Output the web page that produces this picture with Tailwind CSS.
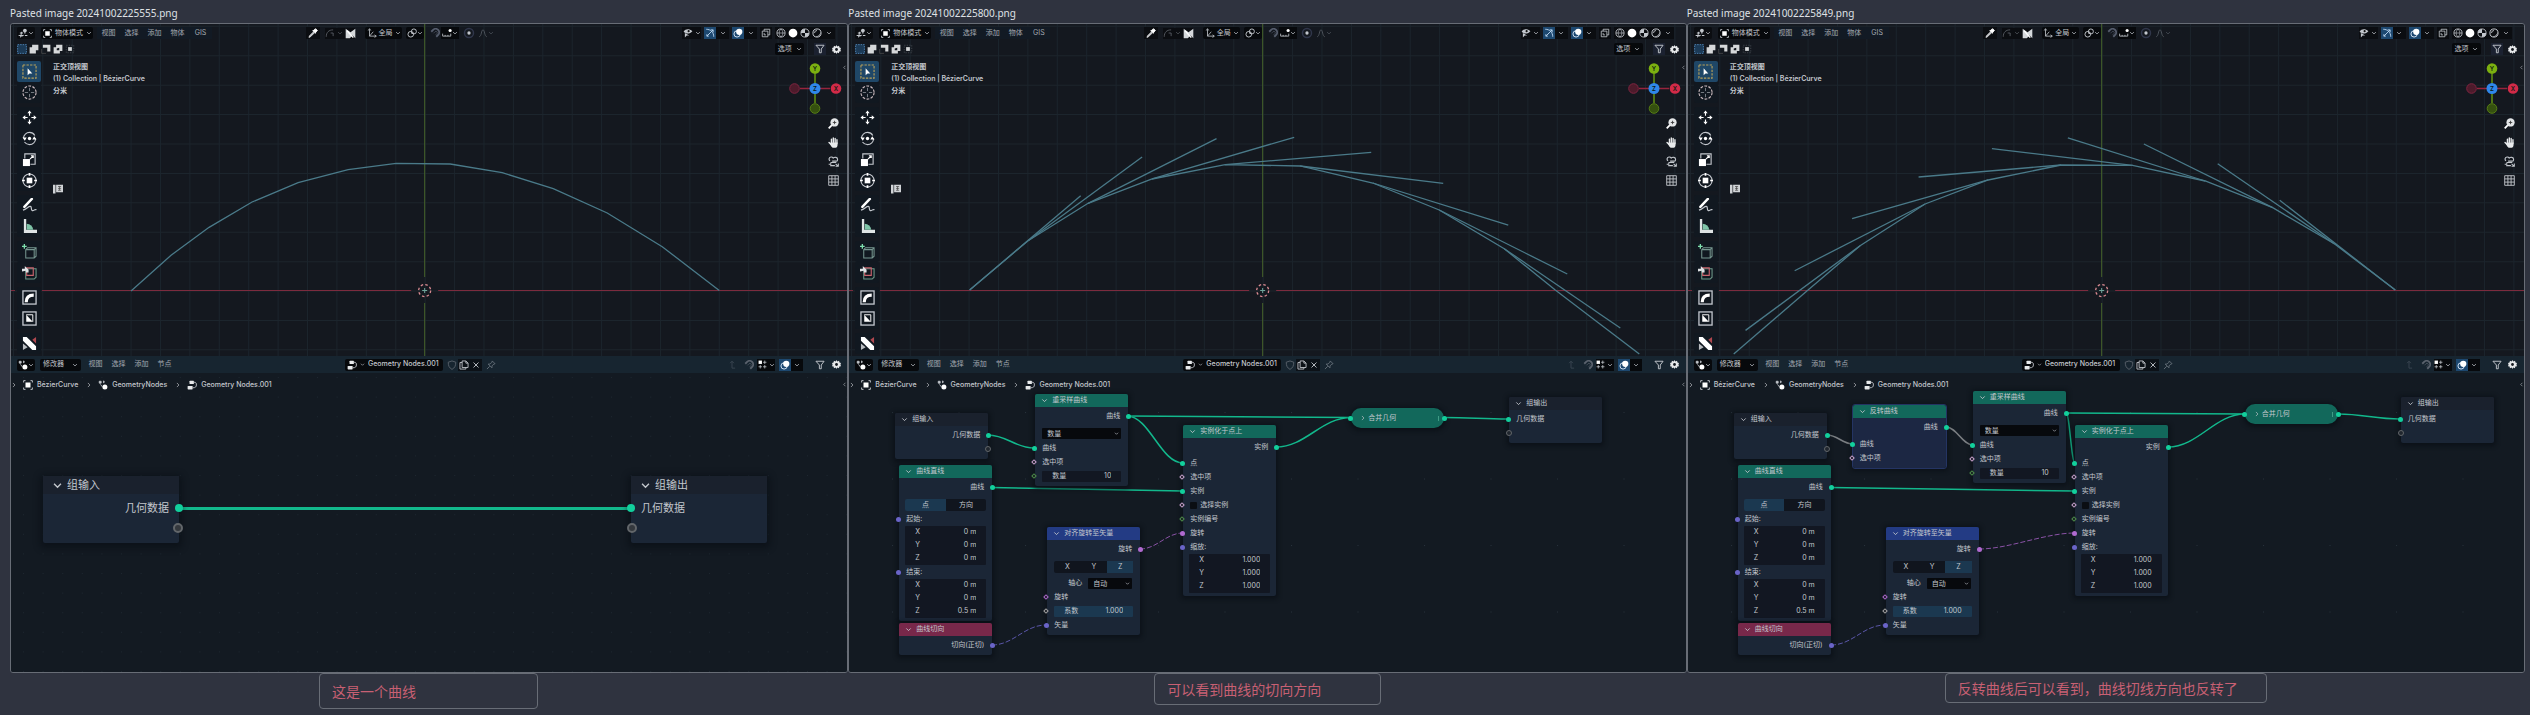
<!DOCTYPE html>
<html lang="zh-CN">
<head>
<meta charset="utf-8">
<title>曲线切向</title>
<script src="https://cdn.jsdelivr.net/npm/@tailwindcss/browser@4"></script>
</head>
<body class="min-h-screen bg-[#2f333f] font-['Inter','Noto_Sans_CJK_SC',sans-serif] text-[#c3c7cd]">

<!-- Icon sprite: every icon is drawn on a 16 unit square -->
<svg class="hidden" aria-hidden="true">
  <symbol id="chev" viewBox="0 0 16 16"><path d="M3 5.500l5 5 5-5" fill="none" stroke="currentColor" stroke-width="2"/></symbol>
  <symbol id="right" viewBox="0 0 16 16"><path d="M5 2.500l5.500 5.500L5 13.500" fill="none" stroke="currentColor" stroke-width="1.800"/></symbol>
  <symbol id="left" viewBox="0 0 16 16"><path d="M11 2.500L5.500 8l5.500 5.500" fill="none" stroke="currentColor" stroke-width="1.800"/></symbol>
  <symbol id="view3d" viewBox="0 0 16 16"><path d="M1 12h8M3 8h5M6 6l-2 9M11 4v5M8 11l-2 3" stroke="currentColor" stroke-width="1.600" fill="none"/><circle cx="11" cy="4" r="3" fill="currentColor"/><path d="M11 12h4" stroke="currentColor" stroke-width="1.600"/></symbol>
  <symbol id="object" viewBox="0 0 16 16"><rect x="4" y="4" width="8" height="8" fill="#fff"/><path d="M1 4V1h3M12 1h3v3M15 12v3h-3M4 15H1v-3" fill="none" stroke="currentColor" stroke-width="1.500"/></symbol>
  <symbol id="dropper" viewBox="0 0 16 16"><path d="M9 4l3-3 3 3-3 3z" fill="#fff" stroke="#fff" stroke-width="1.500" stroke-linejoin="round"/><path d="M7.500 3.500l5 5" stroke="#fff" stroke-width="2"/><path d="M9 6l-6.500 6.500L1.500 15l2.500-1L10.500 7.500" fill="currentColor" stroke="#ddd" stroke-width="1.400"/></symbol>
  <symbol id="arc" viewBox="0 0 16 16"><path d="M2 14C2 7 6 3 13 3" fill="none" stroke="currentColor" stroke-width="1.500"/><path d="M9 8h4v5" fill="none" stroke="currentColor" stroke-width="1.500"/></symbol>
  <symbol id="flag" viewBox="0 0 16 16"><path d="M1 1l7 5 7-5v14l-4-4-4 4H1z" fill="currentColor"/><path d="M3 4l9 10" stroke="#fff" stroke-width="2"/></symbol>
  <symbol id="axes" viewBox="0 0 16 16"><path d="M4 2v11h10M2 4l2-3 2 3M12 11l3 2-3 2M4 13l6-7" fill="none" stroke="currentColor" stroke-width="1.300"/></symbol>
  <symbol id="link" viewBox="0 0 16 16"><circle cx="6" cy="10" r="4.500" fill="none" stroke="currentColor" stroke-width="1.500"/><circle cx="11" cy="5.500" r="4" fill="none" stroke="currentColor" stroke-width="1.500"/><circle cx="8" cy="8" r="1.300" fill="currentColor"/></symbol>
  <symbol id="magnet" viewBox="0 0 16 16"><path d="M2 6l3-3a5.500 5.500 0 018 8l-3 3" fill="none" stroke="currentColor" stroke-width="3"/><path d="M5.500 8.500L8 6a2 2 0 013 3l-2 2" fill="none" stroke="currentColor" stroke-width="1"/></symbol>
  <symbol id="ruler" viewBox="0 0 16 16"><path d="M1 9v4h13V9M5 11v2M9.500 11v2" fill="none" stroke="currentColor" stroke-width="1.300"/><circle cx="13" cy="4" r="2.500" fill="#fff"/></symbol>
  <symbol id="dot" viewBox="0 0 16 16"><circle cx="8" cy="8" r="6" fill="none" stroke="#30364a" stroke-width="2"/><circle cx="8" cy="8" r="2.200" fill="currentColor"/></symbol>
  <symbol id="bell" viewBox="0 0 16 16"><path d="M2 14C6 13 5 3 8 3s2 10 6 11" fill="none" stroke="currentColor" stroke-width="1.500"/></symbol>
  <symbol id="eye" viewBox="0 0 16 16"><path d="M1 6c3-5 9-5 14-1-4 5-10 5-14 1z" fill="currentColor"/><circle cx="9" cy="5" r="1.700" fill="#111"/><path d="M3 8v7l3-3h4z" fill="currentColor"/></symbol>
  <symbol id="gizmo" viewBox="0 0 16 16"><path d="M2 2c7 0 12 5 12 12M3 13L13 3M9 3h4v4M3 10v3h3" fill="none" stroke="#b9d4ef" stroke-width="1.500"/></symbol>
  <symbol id="overlay" viewBox="0 0 16 16"><circle cx="6.500" cy="9.500" r="5" fill="none" stroke="#cfe0f2" stroke-width="1.600"/><circle cx="10" cy="6" r="5" fill="#fff"/></symbol>
  <symbol id="xray" viewBox="0 0 16 16"><path d="M2 5h9v9H2zM5 5V2h9v9h-3M5 8v3h3" fill="none" stroke="currentColor" stroke-width="1.300"/></symbol>
  <symbol id="wire" viewBox="0 0 16 16"><circle cx="8" cy="8" r="6.500" fill="none" stroke="currentColor" stroke-width="1.400"/><path d="M8 1.500c-4 4-4 9 0 13M8 1.500c4 4 4 9 0 13M1.500 8h13" fill="none" stroke="currentColor" stroke-width="1"/></symbol>
  <symbol id="solid" viewBox="0 0 16 16"><circle cx="8" cy="8" r="7" fill="#fff"/></symbol>
  <symbol id="mat" viewBox="0 0 16 16"><circle cx="8" cy="8" r="6.500" fill="none" stroke="currentColor" stroke-width="1.400"/><path d="M8 1.500a6.500 6.500 0 00-6.500 6.500H8zM8 8h6.500A6.500 6.500 0 018 14.500z" fill="currentColor"/></symbol>
  <symbol id="render" viewBox="0 0 16 16"><circle cx="8" cy="8" r="6.500" fill="none" stroke="currentColor" stroke-width="1.600"/><path d="M4 8a4 4 0 014-4" fill="none" stroke="currentColor" stroke-width="1.400"/><path d="M13.500 6A6 6 0 016 13.500c4 0 7-3 7.500-7.500z" fill="currentColor"/></symbol>
  <symbol id="sel0" viewBox="0 0 16 16"><rect x="1" y="1" width="14" height="14" fill="#1c3a56" stroke="#4d83b5" stroke-width="1.500" stroke-dasharray="2.500 1.500"/></symbol>
  <symbol id="sel1" viewBox="0 0 16 16"><path d="M5 1h10v9h-4v5H1V5h4z" fill="#d6d8da"/></symbol>
  <symbol id="sel2" viewBox="0 0 16 16"><path d="M3 1h12v11h-5V6H3z" fill="#d6d8da"/><path d="M1 8v7h7" fill="none" stroke="#555" stroke-width="1"/></symbol>
  <symbol id="sel3" viewBox="0 0 16 16"><path d="M5 1h10v10h-4v4H1V5h4zM6 7v3h4V6z" fill="#d6d8da" fill-rule="evenodd"/></symbol>
  <symbol id="sel4" viewBox="0 0 16 16"><rect x="5" y="5" width="6" height="6" fill="#d6d8da"/><path d="M2 2h12v12H2z" fill="none" stroke="#555b62" stroke-width="1" stroke-dasharray="2 2"/></symbol>
  <symbol id="funnel" viewBox="0 0 16 16"><path d="M1.500 2h13L10 8v6H7V8z" fill="none" stroke="currentColor" stroke-width="1.500"/></symbol>
  <symbol id="gear" viewBox="0 0 16 16"><path d="M8 0l1.500 2.500 3-1 .8 2.800 2.700.9L15 8l1 3-3 .5-.7 3-3-1L8 16l-1.500-2.500-3 1-.7-3L0 11l1-3-1-2.800 2.700-.9.800-2.800 3 1z" fill="#e6e8ea"/><circle cx="8" cy="8" r="2.500" fill="#15191f"/></symbol>
  <symbol id="box-select" viewBox="0 0 16 16"><rect x="1" y="1" width="14" height="14" fill="none" stroke="#b9a15a" stroke-width="1.200" stroke-dasharray="2.500 1.300"/><path d="M6 4.500v7.500l2-2h3z" fill="#fff"/></symbol>
  <symbol id="cursor" viewBox="0 0 16 16"><circle cx="8" cy="8" r="7" fill="none" stroke="#c9b9bd" stroke-width="1.200" stroke-dasharray="3 1.500"/><path d="M8 3v3.500M8 9.500V13M3 8h3.500M9.500 8H13" stroke="#7b8188" stroke-width="1"/></symbol>
  <symbol id="move" viewBox="0 0 16 16"><path d="M8 .5l2.300 3H5.700zM8 15.500l2.300-3H5.700zM.5 8l3-2.300v4.600zM15.500 8l-3-2.300v4.600z" fill="#fff"/><path d="M8 3v3M8 10v3M3 8h3M10 8h3" stroke="#fff" stroke-width="1.200"/></symbol>
  <symbol id="rotate" viewBox="0 0 16 16"><circle cx="8" cy="8" r="6.500" fill="none" stroke="currentColor" stroke-width="1.200" stroke-dasharray="16 4.400"/><circle cx="8" cy="8" r="1.800" fill="#fff"/><path d="M13 5.500l2.500 3.500H11zM3 10.500L.5 7H5z" fill="#fff"/></symbol>
  <symbol id="scale" viewBox="0 0 16 16"><path d="M3 7V2h11v11H9" fill="none" stroke="currentColor" stroke-width="1.200"/><rect x="1" y="7.500" width="7.500" height="7.500" fill="#fff"/><path d="M8.500 7.500L12 4M9.500 4H12v2.500" fill="none" stroke="#fff" stroke-width="1.200"/></symbol>
  <symbol id="transform" viewBox="0 0 16 16"><circle cx="8" cy="8" r="7" fill="none" stroke="currentColor" stroke-width="1.200"/><rect x="5" y="5" width="6" height="6" fill="#fff"/><path d="M8 0v3M8 13v3M0 8h3M13 8h3" stroke="#fff" stroke-width="1.800"/></symbol>
  <symbol id="pen" viewBox="0 0 16 16"><path d="M10.500 1l-8 8.500" stroke="#fff" stroke-width="2.600" stroke-linecap="round"/><path d="M1 13c4-1 6-4.500 8-4s0 4 2 4.500 2-2 4.500-1" fill="none" stroke="currentColor" stroke-width="1.300"/></symbol>
  <symbol id="measure" viewBox="0 0 16 16"><path d="M2 0h2.500v11.500H16V15H2z" fill="#dfe4e4"/><path d="M5 5a7 7 0 017 6.500H5z" fill="#7fc4a8"/></symbol>
  <symbol id="addcube" viewBox="0 0 16 16"><path d="M4 6l2-2h9v9l-2 2H4zM4 6h9v9M13 6l2-2" fill="none" stroke="#76968f" stroke-width="1.100"/><path d="M2.500 0v5M0 2.500h5" stroke="#7fe0ae" stroke-width="1.400"/></symbol>
  <symbol id="extrude" viewBox="0 0 16 16"><path d="M4 6l2-2h9v9l-2 2H4z" fill="none" stroke="#6f9a8a" stroke-width="1.100"/><path d="M5 3h7v8H5z" fill="none" stroke="#c9636c" stroke-width="1.200"/><path d="M0 7V4h3V1l4 4v3H4V6z" fill="#dfe2e5"/></symbol>
  <symbol id="spin" viewBox="0 0 16 16"><rect x="1" y="1" width="14" height="14" fill="none" stroke="currentColor" stroke-width="1.400"/><path d="M4.500 13c0-5 3-7.500 8-7.500" fill="none" stroke="#fff" stroke-width="3.400"/></symbol>
  <symbol id="shear" viewBox="0 0 16 16"><rect x="1" y="1" width="14" height="14" fill="none" stroke="currentColor" stroke-width="1.400"/><path d="M4.500 4l7 7.500h-7z" fill="#fff"/><path d="M4.500 4h7v7.500" fill="none" stroke="#fff" stroke-width="1"/></symbol>
  <symbol id="brush" viewBox="0 0 16 16"><path d="M1 1h4l10 10v4h-4L1 5z" fill="#fff"/><path d="M1 8v7l5-3z" fill="#b9bcc0"/><path d="M15 1l-4 3 4 4z" fill="#b0484f"/></symbol>
  <symbol id="panel" viewBox="0 0 16 16"><path d="M0 1h4v14H0zM5 1h11v12H5z" fill="#d0d3d6"/><path d="M8 4h5M8 7h5M8 10h5M10.500 4v6" stroke="#333" stroke-width="1"/></symbol>
  <symbol id="zoom" viewBox="0 0 16 16"><path d="M6 10l-5 5" stroke="#fff" stroke-width="2.600"/><circle cx="9.500" cy="6.500" r="6" fill="#e4e6e8"/><path d="M9.500 4v5M7 6.500h5" stroke="#333" stroke-width="1.200"/></symbol>
  <symbol id="hand" viewBox="0 0 16 16"><path d="M5 9V3M7.700 8V1.500M10.400 8V2M13 9V4M1.500 8l3 3" stroke="#e8eaec" stroke-width="2" stroke-linecap="round"/><path d="M4 8h10v2c0 3-1 5.500-3 5.500H7.500C5.500 15.500 4 12 3 10z" fill="#e8eaec"/></symbol>
  <symbol id="camera" viewBox="0 0 16 16"><path d="M3 7a3 3 0 011-5.500c2-.5 3 .5 3.500 1.500C9 1.500 14 1 14 5c0 2-1 2.500-2 2.500H6" fill="none" stroke="currentColor" stroke-width="1.600"/><path d="M4 9.500h8M4 9.500v4.500h6M1 12h2M11 11.500l4 3.500M15 11v4h-4" fill="none" stroke="currentColor" stroke-width="1.500"/></symbol>
  <symbol id="grid" viewBox="0 0 16 16"><path d="M1 1h14v14H1zM5.700 1v14M10.300 1v14M1 5.700h14M1 10.300h14" fill="none" stroke="currentColor" stroke-width="1.300"/></symbol>
  <symbol id="geonodes" viewBox="0 0 16 16"><circle cx="11" cy="11" r="4" fill="#fff"/><path d="M2 2h3v3H2zM8 3h3M4 7l3 4M9 1v4" fill="currentColor" stroke="currentColor" stroke-width="1.400"/></symbol>
  <symbol id="tree" viewBox="0 0 16 16"><rect x="4" y="1" width="7" height="5.500" rx="1" fill="#e8eaec"/><rect x="1" y="9.500" width="8" height="5.500" rx="1" fill="#e8eaec"/><path d="M11 3.500c4 0 4 2 4 4.500s-1 4.500-6 4.500" fill="none" stroke="currentColor" stroke-width="1.400"/></symbol>
  <symbol id="shield" viewBox="0 0 16 16"><path d="M8 1.500l6 2c0 6-1.500 9-6 11.500-4.500-2.500-6-5.500-6-11.500z" fill="none" stroke="currentColor" stroke-width="1.400"/></symbol>
  <symbol id="copy" viewBox="0 0 16 16"><path d="M5 1.500h6l3.500 3.500v7H5zM11 1.500V5h3.500M5 4H1.500v10.500H11V12" fill="none" stroke="currentColor" stroke-width="1.400"/></symbol>
  <symbol id="cross" viewBox="0 0 16 16"><path d="M3 3l10 10M13 3L3 13" stroke="currentColor" stroke-width="1.800"/></symbol>
  <symbol id="pin" viewBox="0 0 16 16"><path d="M10 1.500l4.500 4.500-2 .5-3 3 0 3-6-6h3l3-3zM6 10l-4.500 4.500" fill="none" stroke="currentColor" stroke-width="1.400"/></symbol>
  <symbol id="up" viewBox="0 0 16 16"><path d="M5 5l3-3 3 3M8 2v11h5" fill="none" stroke="currentColor" stroke-width="1.400"/></symbol>
  <symbol id="snapgrid" viewBox="0 0 16 16"><rect x="1" y="1" width="6" height="6" fill="#fff"/><path d="M9 4h6M12 1v6M1 12h6M4 9v6M9 12h6M12 9v6" stroke="currentColor" stroke-width="1.400"/></symbol>
</svg>

<main id="board" class="grid grid-cols-3 pl-[10px] pr-[5px]"></main>

<script>
const icon = (id, cls) => `<svg class="${cls || 'size-[10px]'} shrink-0" aria-hidden="true"><use href="#${id}"/></svg>`;
const chev = icon('chev', 'size-[6px]');
const btn = (inner, cls, label) => `<button aria-label="${label || ''}" class="flex h-[12px] items-center justify-center ${cls}">${inner}</button>`;
const menus = names => names.map(n => `<button class="w-[23px] text-center whitespace-nowrap text-[#a3a9b1]">${n}</button>`).join('');

/* ---------- 3D viewport ---------- */
const AX = 425, AY = 291, STEP = 29.4;
function scene(curve, tangents) {
  let g = '';
  for (let k = -14; k <= 14; k++) g += `<path d="M${AX + STEP * k} 24V356"/>`;
  for (let k = -9; k <= 2; k++) g += `<path d="M11 ${AY + STEP * k}H847"/>`;
  return `<svg class="absolute inset-0 h-full w-full" viewBox="11 24 836 332" preserveAspectRatio="xMidYMid slice" aria-hidden="true">
    <g stroke="#1c252d" stroke-width="1">${g}</g>
    <path d="M11 ${AY - .5}h4M42 ${AY - .5}H411M438 ${AY - .5}H847" stroke="#7c2b3e"/>
    <path d="M${AX - .5} 24V277M${AX - .5} 303V356" stroke="#45612a"/>
    <circle cx="424.500" cy="290.500" r="6" fill="none" stroke="#d98a91" stroke-width="1.300" stroke-dasharray="2.500 2.200"/>
    <path d="M424.500 288v5M422 290.500h5" stroke="#6fa59b" stroke-width="1"/>
    <g fill="none" stroke="#4a7a89" stroke-width="1.300"><polyline points="${curve}"/>${tangents.map(t => `<path d="M${t[0]}L${t[1]}"/>`).join('')}</g>
  </svg>`;
}
const tools = [
  ['box-select','框选'],['cursor','游标'],0,['move','移动'],['rotate','旋转'],['scale','缩放'],['transform','变换'],0,
  ['pen','标注'],['measure','测量'],0,['addcube','添加立方体'],['extrude','挤出'],0,['spin','旋绕'],['shear','切变'],0,['brush','笔刷']];
const toolbar = tools.map((t, i) => t === 0 ? '<span class="h-[4px]"></span>' :
  `<button aria-label="${t[1]}" class="flex h-[21px] w-[24px] items-center justify-center rounded-[2px] ${i === 0 ? 'bg-[#1f4767]' : 'bg-[#111820]'}">${icon(t[0], 'size-[15px]')}</button>`).join('');

const viewport = p => `
<section aria-label="3D 视图" class="relative flex h-[332px] flex-col overflow-hidden bg-[#14181f] text-[7px]">
  ${scene(p.curve, p.tangents)}
  <header class="relative mt-[3px] flex h-[12px] items-center pl-[6px] pr-[12px]">
    ${btn(icon('view3d') + chev, 'w-[18px] rounded-[2px] bg-[#0b0d11]', '编辑器类型')}
    <button class="ml-[6px] flex h-[12px] w-[52px] items-center gap-[3px] rounded-[2px] bg-[#07090c] pl-[2px] whitespace-nowrap">${icon('object', 'size-[9px]')}<span>物体模式</span>${chev}</button>
    <nav class="ml-[4px] flex h-[12px] items-center bg-[#121a24]">${menus(['视图','选择','添加','物体','GIS'])}</nav>
    ${btn(icon('dropper'), 'ml-[94px] w-[14px] bg-[#0b0d11]', '吸管')}
    <div class="ml-[5px] flex w-[30px] items-center gap-[2px] bg-[#0b0d11] text-[#565b62]">${icon('arc')}${chev}${icon('flag', 'size-[11px] text-[#d5d8db]')}</div>
    ${btn(icon('axes') + '<span>全局</span>' + chev, 'ml-[10px] w-[37px] gap-[2px] rounded-[2px] bg-[#07090c]', '变换坐标系')}
    ${btn(icon('link') + chev, 'ml-[4px] w-[18px] rounded-[2px] bg-[#07090c]', '轴心点')}
    ${btn(icon('magnet'), 'ml-[5px] w-[12px] text-[#555c6c]', '吸附')}
    ${btn(icon('ruler') + chev, 'w-[18px] bg-[#07090c]', '吸附选项')}
    ${btn(icon('dot', 'size-[12px]'), 'ml-[4px] w-[12px]', '衰减编辑')}
    ${btn(icon('bell') + chev, 'ml-[2px] w-[18px] text-[#4f555d]', '衰减曲线')}
    <div class="ml-auto flex items-center">
      ${btn(icon('eye') + chev, 'w-[19px] gap-[2px] bg-[#0b0d11]', '可见性')}
      ${btn(icon('gizmo'), 'ml-[3px] w-[12px] bg-[#1d4870]', 'Gizmo')}${btn(chev, 'w-[13px] bg-[#0b0d11]', 'Gizmo 选项')}
      ${btn(icon('overlay'), 'ml-[3px] w-[12px] bg-[#1d4870]', '叠加层')}${btn(chev, 'w-[13px] bg-[#0b0d11]', '叠加层选项')}
      ${btn(icon('xray'), 'ml-[3px] w-[12px] bg-[#0b0d11]', '透视')}
      <div class="ml-[3px] flex bg-[#0b0d11]">${['wire','solid','mat','render'].map(s => btn(icon(s), 'w-[12px]', s)).join('')}${btn(chev, 'w-[12px]', '着色选项')}</div>
    </div>
  </header>
  <div class="relative mt-[4px] flex h-[12px] items-center gap-[2px] pl-[6px] pr-[5px]">
    ${['sel0','sel1','sel2','sel3','sel4'].map(s => btn(icon(s), 'w-[10px]', s)).join('')}
    ${btn('<span>选项</span>' + chev, 'ml-auto w-[29px] gap-[4px] rounded-[2px] bg-[#07090c]', '选项')}
    ${btn(icon('funnel'), 'ml-[8px] w-[12px] bg-[#1b2130]', '过滤')}
    ${btn(icon('gear', 'size-[9px]'), 'ml-[2px] w-[12px]', '设置')}
  </div>
  <div class="relative flex grow pl-[6px] pt-[6px]">
    <div class="flex flex-col">${toolbar}</div>
    <div class="ml-[12px] font-semibold leading-[12px]">
      <p>正交顶视图</p><p>(1) Collection | BézierCurve</p><p>分米</p>
      <span class="mt-[87px] block">${icon('panel')}</span>
    </div>
    <div class="ml-auto flex flex-col items-end pr-[5px]">
      <svg class="h-[54px] w-[56px]" viewBox="786 61 56 54" aria-label="视图方向">
        <path d="M815 68v20M815 88v15" stroke="#5d8d12" stroke-width="1.600"/><path d="M800 88.500h30" stroke="#97243d" stroke-width="1.600"/>
        <circle cx="815" cy="68.500" r="5.300" fill="#7cb010"/><circle cx="815" cy="108.500" r="4.800" fill="#35500f" stroke="#567d15"/>
        <circle cx="794.500" cy="88.500" r="4.800" fill="#4d1b2b" stroke="#7d2440"/><circle cx="836" cy="88.500" r="5.300" fill="#d22a48"/>
        <circle cx="815" cy="88.500" r="5.500" fill="#2f87ea"/>
        <g font-size="6" font-weight="600" text-anchor="middle" fill="#0c1a10"><text x="815" y="71">Y</text><text x="815" y="91">Z</text><text x="836" y="91">X</text></g>
      </svg>
      <div class="mr-[3px] mt-[2px] flex flex-col gap-[7px]">${['zoom','hand','camera','grid'].map(s => btn(icon(s, 'size-[11px]'), 'w-[12px]', s)).join('')}</div>
    </div>
  </div>
  <span class="absolute right-0 top-[41px]">${icon('left', 'size-[5px]')}</span>
</section>`;

/* ---------- node editor ---------- */
const COL = { geo: 'bg-[#12cf9c]', bool: 'bg-[#caa3d0]', int: 'bg-[#4f8f4c]', vec: 'bg-[#6a64c8]', rot: 'bg-[#b06ad0]', val: 'bg-[#a5a5a5]' };
function socket(kind, side, big) {
  const pos = big ? (side === 'l' ? '-left-[4px]' : '-right-[4px]') : (side === 'l' ? '-left-[3px]' : '-right-[3px]');
  if (kind === 'none') return `<i class="absolute inset-y-0 my-auto rounded-full border ${pos} ${big ? 'size-[10px] border-2 border-[#62666a] bg-[#34383d]' : 'size-[6px] border-[#62666a] bg-[#20262e]'}"></i>`;
  if (kind.endsWith('*')) return `<i class="absolute inset-y-0 my-auto size-[4px] rotate-45 ${pos} ${COL[kind.slice(0, -1)]} flex items-center justify-center"><b class="size-[2px] bg-[#14181f]"></b></i>`;
  return `<i class="absolute inset-y-0 my-auto rounded-full ${pos} ${big ? 'size-[8px]' : 'size-[5px]'} ${COL[kind]}"></i>`;
}
const out = (t, k) => `<div class="relative flex h-[14px] items-center justify-end px-[8px]">${t}${socket(k, 'r')}</div>`;
const inp = (t, k) => `<div class="relative flex h-[14px] items-center px-[7px]">${t}${socket(k, 'l')}</div>`;
const num = (t, v, k, cls) => `<label class="relative flex h-[14px] items-center px-[7px]">
  <span class="flex h-[11px] w-full items-center justify-between rounded-[1px] px-[10px] ${cls}"><span>${t}</span><input class="w-[30px] bg-transparent text-right" value="${v}"></span>${socket(k, 'l')}</label>`;
const xyz = vals => `<div class="mx-[6px] rounded-[1px] bg-[#121722]">${['X','Y','Z'].map((a, i) =>
  `<label class="flex h-[13px] items-center justify-between px-[10px]"><span>${a}</span><input class="w-[40px] bg-transparent text-right" value="${vals[i]}"></label>`).join('')}</div>`;
const pick = (label, v, cls) => `<span class="relative flex h-[11px] items-center rounded-[1px] bg-[#07090d] ${cls}">
  <select aria-label="${label}" class="h-[11px] w-full appearance-none bg-transparent pl-[5px] leading-[11px]"><option>${v}</option></select>
  <span class="pointer-events-none absolute right-[2px]">${icon('chev', 'size-[5px]')}</span></span>`;
const HEAD = { green: 'bg-[#12685b]', blue: 'bg-[#233b84]', red: 'bg-[#78284a]', plain: 'bg-[#1a212d]' };
const node = (title, color, place, body, shell) => `
<article class="absolute w-[93px] rounded-[2px] pb-[3px] shadow-[0_1px_4px_2px_rgba(8,14,20,0.7)] ${shell || 'bg-[#1b2636]'} ${place}">
  <h3 class="mb-[2px] flex h-[13px] items-center gap-[4px] rounded-t-[2px] pl-[6px] ${HEAD[color]}">${icon('chev', 'size-[7px]')}${title}</h3>${body}
</article>`;

const nInput = node('组输入', 'plain', 'left-[46px] top-[40px]', out('几何数据', 'geo') + out('', 'none'));
const nLine = node('曲线直线', 'green', 'left-[50px] top-[92px]',
  out('曲线', 'geo') +
  `<div class="mx-[6px] mb-px mt-[5px] flex h-[12px] text-center"><button class="grow basis-0 rounded-l-[2px] bg-[#1b3850]">点</button><button class="grow basis-0 rounded-r-[2px] bg-[#10151e]">方向</button></div>` +
  inp('起始:', 'vec') + xyz(['0 m','0 m','0 m']) + inp('结束:', 'vec') + xyz(['0 m','0 m','0.5 m']));
const nTangent = node('曲线切向', 'red', 'left-[50px] top-[250px]', out('切向(正切)', 'vec'));
const nAlign = node('对齐旋转至矢量', 'blue', 'left-[198px] top-[154px]',
  out('旋转', 'rot') +
  `<div class="mx-[7px] mb-[3px] mt-[5px] flex h-[12px] rounded-[2px] bg-[#10151e] text-center"><button class="grow basis-0">X</button><button class="grow basis-0">Y</button><button class="grow basis-0 bg-[#1b3850]">Z</button></div>
   <div class="flex h-[14px] items-center justify-end gap-[6px] px-[8px]"><span>轴心</span>${pick('轴心', '自动', 'w-[44px]')}</div>` +
  inp('旋转', 'rot*') + num('系数', '1.000', 'val*', 'bg-[#1b3850]') + inp('矢量', 'vec'));
const resample = place => node('重采样曲线', 'green', place,
  out('曲线', 'geo') + pick('模式', '数量', 'mx-[7px] mb-[2px] mt-[5px]') +
  inp('曲线', 'geo') + inp('选中项', 'bool*') + num('数量', '10', 'int*', 'bg-[#121722]'));
const instance = place => node('实例化于点上', 'green', place,
  out('实例', 'geo') + '<div class="h-[2px]"></div>' + inp('点', 'geo') + inp('选中项', 'bool*') + inp('实例', 'geo') +
  inp('<label class="flex items-center gap-[3px]"><input type="checkbox" class="size-[7px] appearance-none rounded-[1px] bg-[#0b0e13]">选择实例</label>', 'bool*') +
  inp('实例编号', 'int*') + inp('旋转', 'rot') + inp('缩放:', 'vec') + xyz(['1.000','1.000','1.000']));
const reverse = node('反转曲线', 'green', 'left-[165px] top-[32px]',
  out('曲线', 'geo') + '<div class="h-[3px]"></div>' + inp('曲线', 'geo') + inp('选中项', 'bool*'), 'bg-[#1c2743] outline outline-[#243463]');
const outputNode = place => node('组输出', 'plain', place, inp('几何数据', 'geo') + inp('', 'none'));
const join = place => `<article class="absolute flex h-[20px] w-[93px] items-center gap-[2px] rounded-full bg-[#12685b] pl-[9px] shadow-[0_1px_4px_2px_rgba(8,14,20,0.7)] ${place}">
  ${icon('right', 'size-[6px]')}<h3>合并几何</h3><span class="ml-auto mr-[5px] h-[5px] w-px bg-[#3f9c86]"></span>${socket('geo', 'l')}${socket('geo', 'r')}</article>`;
const bigNode = (title, place, row, end, side) => `
<article class="absolute w-[136px] rounded-[2px] bg-[#1b2636] pb-[5px] text-[11px] shadow-[0_2px_6px_3px_rgba(8,14,20,0.6)] ${place}">
  <h3 class="mb-[4px] flex h-[18px] items-center gap-[4px] bg-[#1a212d] pl-[9px]">${icon('chev', 'size-[11px]')}${title}</h3>
  <div class="relative flex h-[20px] items-center px-[10px] ${end}">${row}${socket('geo', side, true)}</div>
  <div class="relative h-[20px]">${socket('none', side, true)}</div>
</article>`;

/* a link leaves and enters its sockets horizontally */
const link = (x1, y1, x2, y2, stroke, extra) => {
  const d = Math.min(30, (x2 - x1) / 2.5);
  return `<path d="M${x1} ${y1}C${x1 + d} ${y1} ${x2 - d} ${y2} ${x2} ${y2}" stroke="${stroke || '#12b88c'}" ${extra || ''}/>`;
};
const dash = 'stroke-dasharray="5 2" stroke-width="1"';
const common = link(154,645,208,625,'#5a56a8',dash);

const crumb = (ic, t) => `<li class="flex items-center gap-[4px]">${icon('right', 'mr-[2px] size-[6px]')}${icon(ic)}<a href="#">${t}</a></li>`;
const editor = (p, i) => `
<section aria-label="几何节点编辑器" class="text-[7px]">
  <header class="flex h-[17px] items-center bg-[#172530] pl-[6px] pr-[5px]">
    ${btn(icon('geonodes') + chev, 'w-[18px] rounded-[2px] bg-[#07090c]', '编辑器类型')}
    ${btn('<span>修改器</span>' + chev, 'ml-[5px] w-[41px] gap-[8px] rounded-[2px] bg-[#07090c] whitespace-nowrap', '修改器')}
    <nav class="ml-[3px] flex">${menus(['视图','选择','添加','节点'])}</nav>
    <div class="ml-[169px] flex h-[12px] w-[98px] items-center gap-[3px] rounded-[2px] bg-[#07090c] pl-[2px] whitespace-nowrap">${icon('tree')}${icon('chev', 'size-[5px]')}<input aria-label="节点组名称" class="w-[76px] bg-transparent font-medium" value="Geometry Nodes.001"></div>
    ${btn(icon('shield'), 'ml-[3px] w-[12px] text-[#5d656e]', '伪用户')}
    ${btn(icon('copy'), 'w-[12px] bg-[#0c1117]', '新建')}
    ${btn(icon('cross', 'size-[8px]'), 'w-[12px] bg-[#0c1117]', '断开')}
    ${btn(icon('pin'), 'ml-[3px] w-[12px] text-[#68727c]', '固定')}
    <div class="ml-auto flex items-center">
      ${btn(icon('up'), 'w-[12px] text-[#3c4854]', '上级')}
      ${btn(icon('magnet'), 'ml-[5px] w-[12px] text-[#5a626d]', '吸附')}
      ${btn(icon('snapgrid', 'size-[9px]') + chev, 'ml-[2px] w-[18px] gap-[2px] bg-[#07090c]', '吸附到')}
      ${btn(icon('overlay'), 'ml-[4px] w-[12px] bg-[#1d4870]', '叠加层')}${btn(chev, 'w-[12px] bg-[#07090c]', '叠加层选项')}
      ${btn(icon('funnel'), 'ml-[11px] w-[12px]', '过滤')}
      ${btn(icon('gear', 'size-[9px]'), 'ml-[4px] w-[12px]', '设置')}
    </div>
  </header>
  <div class="relative h-[299px] overflow-hidden bg-[#131a22]">
    <svg class="absolute inset-0 h-full w-full" aria-hidden="true">
      <defs><pattern id="dots${i}" x="${p.dot[0]}" y="${p.dot[1]}" width="${p.dot[2]}" height="${p.dot[2]}" patternUnits="userSpaceOnUse"><rect width="1" height="1" fill="${p.dot[3]}"/></pattern></defs>
      <rect width="100%" height="100%" fill="url(#dots${i})"/>
      <g transform="translate(-11 -373)" fill="none" stroke-width="1.500">${p.links}</g>
    </svg>
    <nav class="relative flex h-[24px] items-center" aria-label="路径"><ol class="flex items-center gap-[8px] font-medium whitespace-nowrap">
      ${crumb('object', 'BézierCurve')}${crumb('geonodes', 'GeometryNodes')}${crumb('tree', 'Geometry Nodes.001')}</ol></nav>
    <span class="absolute right-0 top-[9px]">${icon('left', 'size-[5px]')}</span>
    ${p.nodes}
  </div>
</section>`;

const panels = [
  {
    name: 'Pasted image 20241002225555.png', note: '这是一个曲线', box: 'ml-[309px] w-[219px] h-[36px]',
    curve: '131,291 171,255.300 209,227.300 252,202 298,182.700 348,169.700 396,163.300 450,164 502,172.700 553,188.700 607,213 662,246.700 719,290.500', tangents: [],
    dot: [12, 4, 19.6, '#1d2730'],
    links: link(180,508.5,630,508.5,'#12b88c','stroke-width="3"'),
    nodes: bigNode('组输入', 'left-[32px] top-[103px]', '几何数据', 'justify-end', 'r') + bigNode('组输出', 'left-[620px] top-[103px]', '几何数据', 'justify-start', 'l')
  },
  {
    name: 'Pasted image 20241002225800.png', note: '可以看到曲线的切向方向', box: 'ml-[306px] w-[227px] h-[32px]',
    curve: '131.600,290 190,240.700 250,203.300 314,179 387,164.700 462,166 534.600,183 601,210 666,248.700 717,290',
    tangents: [['131.600 290','242.600 195.700'],['190 240.700','304 157'],['250 203.300','378.400 138.700'],['314 179','456 137.300'],['387 164.700','533 152.300'],['462 166','605 183.300'],['534.600 183','670 225'],['601 210','729 274'],['666 248.700','782 328'],['717 290','801 354']],
    dot: [43, 39, 66.5, '#27313b'],
    links: link(150,435,196,448) + link(289,416,345,463) + link(289,416,513,417.5) + link(438,447,513,417.5) + link(607,417.5,670,419) + link(153,487.5,345,491) + link(302,549,345,533,'#8a52a6',dash) + common,
    nodes: nInput + nLine + nTangent + nAlign + resample('left-[186px] top-[21px]') + instance('left-[334px] top-[52px]') + join('left-[502px] top-[35px]') + outputNode('left-[660px] top-[24px]')
  },
  {
    name: 'Pasted image 20241002225849.png', note: '反转曲线后可以看到，曲线切线方向也反转了', box: 'ml-[258px] w-[322px] h-[30px]',
    curve: '718,290 657.400,244 595.500,207.700 528,181 455.400,165.300 384,165 311,180 248,204 183,245.700 131,290',
    tangents: [['718 290','602.500 200.300'],['657.400 244','540.500 163.700'],['595.500 207.700','466.700 144'],['528 181','390.700 138'],['455.400 165.300','314.800 148.700'],['384 165','241.500 177'],['311 180','175 218.700'],['248 204','117.600 270.700'],['183 245.700','68.500 330.300'],['131 290','56.700 354']],
    dot: [43, 39, 66.5, '#27313b'],
    links: link(150,435,176,444,'#7b7f83') + link(269,427,296,445,'#7b7f83') + link(389,413,398,463) + link(389,413,568,414) + link(491,447,568,414) + link(661,414,723,419) + link(153,487.5,398,491) + link(302,549,398,533,'#8a52a6',dash) + common,
    nodes: nInput + nLine + nTangent + nAlign + reverse + resample('left-[285px] top-[18px]') + instance('left-[387px] top-[52px]') + join('left-[557px] top-[31px]') + outputNode('left-[713px] top-[24px]')
  }
];

document.getElementById('board').innerHTML = panels.map((p, i) => `
<figure class="min-w-0">
  <h2 class="flex h-[23px] items-center pt-[3px] font-['Noto_Sans',sans-serif] text-[10px] text-[#dfe1e5]">${p.name}</h2>
  <div class="overflow-hidden rounded-[3px] border border-[#686d76]">${viewport(p)}${editor(p, i)}</div>
  <figcaption class="flex items-center rounded-[4px] border border-[#686d76] pl-[12px] text-[14px] whitespace-nowrap text-[#c86073] ${p.box}">${p.note}</figcaption>
</figure>`).join('');
</script>
</body>
</html>
